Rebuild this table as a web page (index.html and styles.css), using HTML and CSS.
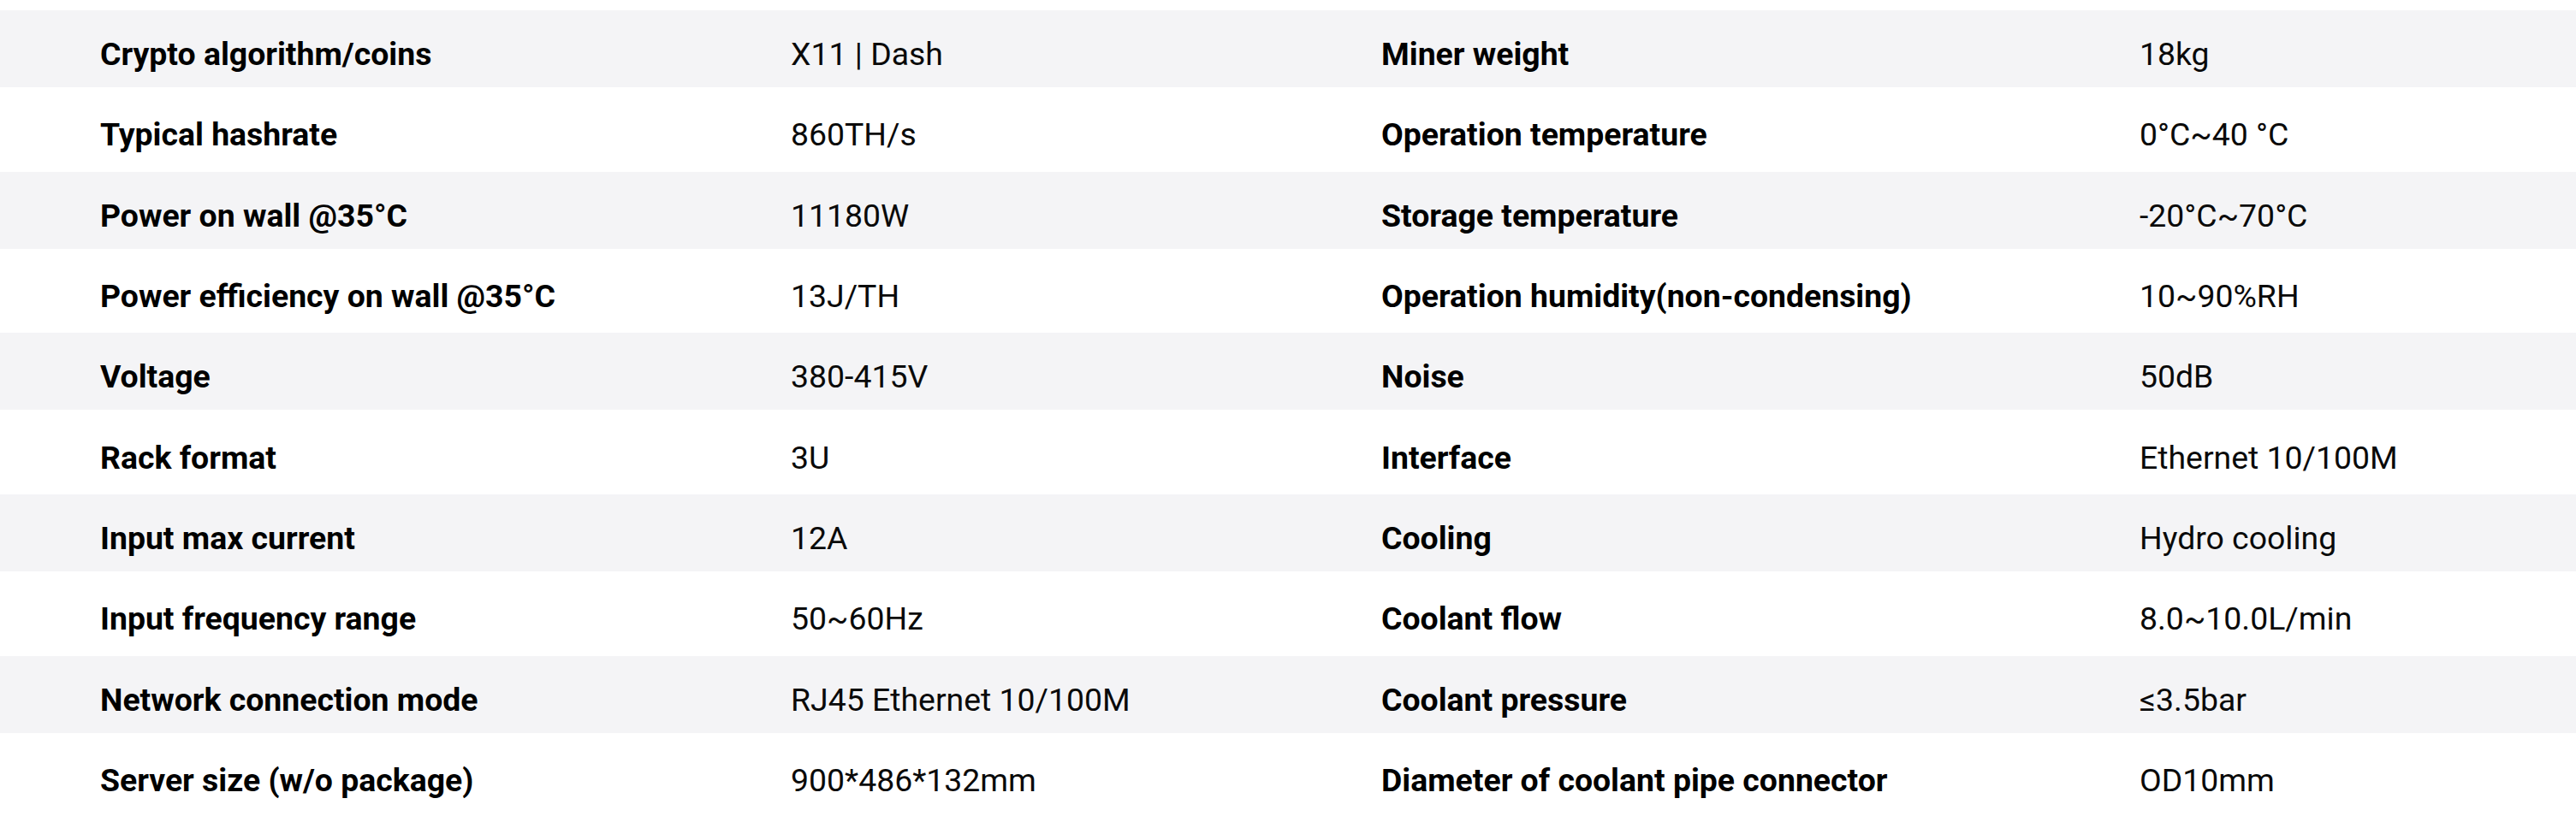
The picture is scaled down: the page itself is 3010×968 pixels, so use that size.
FILE: index.html
```html
<!DOCTYPE html>
<html lang="en">
<head>
<meta charset="utf-8">
<title>Specifications</title>
<link rel="stylesheet" href="styles.css">
</head>
<body>
<div class="specs">
  <div class="row alt"><div class="cell label">Crypto algorithm/coins</div><div class="cell value">X11 | Dash</div><div class="cell label">Miner weight</div><div class="cell value">18kg</div></div>
  <div class="row"><div class="cell label">Typical hashrate</div><div class="cell value">860TH/s</div><div class="cell label">Operation temperature</div><div class="cell value">0°C~40 °C</div></div>
  <div class="row alt"><div class="cell label">Power on wall @35°C</div><div class="cell value">11180W</div><div class="cell label">Storage temperature</div><div class="cell value">-20°C~70°C</div></div>
  <div class="row"><div class="cell label">Power efficiency on wall @35°C</div><div class="cell value">13J/TH</div><div class="cell label">Operation humidity(non-condensing)</div><div class="cell value">10~90%RH</div></div>
  <div class="row alt"><div class="cell label">Voltage</div><div class="cell value">380-415V</div><div class="cell label">Noise</div><div class="cell value">50dB</div></div>
  <div class="row"><div class="cell label">Rack format</div><div class="cell value">3U</div><div class="cell label">Interface</div><div class="cell value">Ethernet 10/100M</div></div>
  <div class="row alt"><div class="cell label">Input max current</div><div class="cell value">12A</div><div class="cell label">Cooling</div><div class="cell value">Hydro cooling</div></div>
  <div class="row"><div class="cell label">Input frequency range</div><div class="cell value">50~60Hz</div><div class="cell label">Coolant flow</div><div class="cell value">8.0~10.0L/min</div></div>
  <div class="row alt"><div class="cell label">Network connection mode</div><div class="cell value">RJ45 Ethernet 10/100M</div><div class="cell label">Coolant pressure</div><div class="cell value">≤3.5bar</div></div>
  <div class="row"><div class="cell label">Server size (w/o package)</div><div class="cell value">900*486*132mm</div><div class="cell label">Diameter of coolant pipe connector</div><div class="cell value">OD10mm</div></div>
</div>
</body>
</html>
```

FILE: styles.css
```css
html, body {
  margin: 0;
  padding: 0;
  background: #ffffff;
}

body {
  font-family: Roboto, "Liberation Sans", sans-serif;
  color: #000000;
}

.specs {
  display: flex;
  flex-direction: column;
  gap: 4.33px;
  padding-top: 12px;
}

.row {
  display: grid;
  grid-template-columns: 807px 690px 886px 1fr;
  height: 90px;
  box-sizing: border-box;
  padding-top: 30px;
}

.row.alt {
  background: #f4f4f6;
}

.cell {
  padding-left: 117px;
  font-size: 37.4px;
  line-height: 42px;
  white-space: nowrap;
}

.label {
  font-weight: 700;
}

.value {
  font-weight: 400;
  color: #0a0a0a;
}
```
